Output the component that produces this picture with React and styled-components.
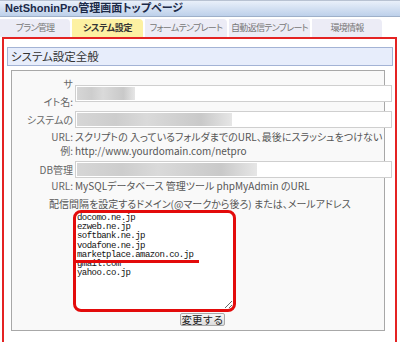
import styled, { createGlobalStyle } from "styled-components";

const GlobalStyle = createGlobalStyle`
  body {
    margin: 0;
    background: #fff;
    font-family: "Noto Sans CJK JP", "Liberation Sans", sans-serif;
  }
`;

const Page = styled.div`
  width: 400px;
  height: 342px;
  overflow: hidden;
  background: #fff;
`;

const Header = styled.div`
  height: 15px;
  border-top: 1px solid #b8c2d2;
  border-bottom: 1px solid #9eb0c9;
  background: linear-gradient(#e9f0fa, #bdd0ea);
  padding-left: 5px;
  font: bold 11px/15px "Liberation Sans", "Noto Sans CJK JP", sans-serif;
  color: #1c2a48;
  font-feature-settings: "palt";
`;

const Tabs = styled.div`
  display: flex;
  gap: 2px;
  margin-top: 2px;
  height: 18px;
`;

const Tab = styled.div`
  width: ${(p) => p.$w}px;
  background: ${(p) => (p.$active ? "#fdf1a2" : "#ececf6")};
  border-top-right-radius: 4px;
  text-align: center;
  white-space: nowrap;
  font-size: 9px;
  letter-spacing: ${(p) => (p.$active ? "-0.3px" : "-0.7px")};
  line-height: 18px;
  font-weight: ${(p) => (p.$active ? "bold" : "normal")};
  color: ${(p) => (p.$active ? "#333" : "#777")};
  font-feature-settings: "palt";
`;

const Panel = styled.div`
  margin: 0 3px 0 2px;
  border: 2px solid #e42323;
  border-bottom: none;
  padding: 8px 2px 20px 3px;
  background: #fff;
`;

const SectionTitle = styled.div`
  height: 17px;
  border: 1px solid #a3b3d5;
  background: #e7edfb;
  padding-left: 3px;
  font-size: 11.5px;
  line-height: 17px;
  color: #333;
  font-feature-settings: "palt";
`;

const Box = styled.div`
  margin: 4px 8px 0 4px;
  border: 1px solid #a8a8a8;
  background: #f9f9f9;
  padding: 4px 0 4px 0;
`;

const Row = styled.div`
  display: grid;
  grid-template-columns: 61px 1fr;
  column-gap: 2px;
  align-items: center;
  margin-top: ${(p) => p.$mt || 0}px;
  min-height: ${(p) => p.$h || 0}px;
`;

const Label = styled.div`
  text-align: right;
  font-size: 10px;
  line-height: ${(p) => p.$lh || 15}px;
  color: #666;
  font-feature-settings: "palt";
  white-space: nowrap;
`;

const Text = styled.div`
  font-size: 10px;
  line-height: ${(p) => p.$lh || 15}px;
  color: #555;
  white-space: nowrap;
  font-feature-settings: "palt";
`;

const Note = styled(Text)`
  grid-column: 1 / -1;
  padding-left: 37px;
`;

const Field = styled.div`
  width: 314px;
  height: 15px;
  border: 1px solid #cfcfcf;
  background: #fff;
  display: flex;
  align-items: center;
  padding-left: 1px;
`;

const Blur = styled.div`
  width: ${(p) => p.$w}px;
  height: 13px;
  background: linear-gradient(
    90deg,
    #d6d6d6 0%,
    #cdcdcd 25%,
    #dadada 45%,
    #d0d0d0 65%,
    #c9c9c9 80%,
    #e6e6e6 100%
  );
`;

const AreaWrap = styled.div`
  position: relative;
  width: 163px;
  height: 102px;
  margin-left: -2px;
`;

const Area = styled.textarea`
  display: block;
  box-sizing: border-box;
  width: 163px;
  height: 102px;
  border: 3px solid #e30b0b;
  border-radius: 8px;
  padding: 1px 1px;
  margin: 0;
  background: #fff;
  font-family: "Liberation Mono", "DejaVu Sans Mono", monospace;
  font-size: 9px;
  letter-spacing: -0.55px;
  line-height: 9.2px;
  color: #111;
  outline: none;
  overflow: hidden;
`;

const Strike = styled.div`
  position: absolute;
  left: 3px;
  top: 50px;
  width: 123px;
  height: 2.5px;
  background: #e30b0b;
`;

const Button = styled.button`
  margin-left: ${(p) => p.$ml}px;
  width: 45px;
  height: 13px;
  padding: 0;
  border: 1px solid #a9a9a9;
  border-radius: 2px;
  background: linear-gradient(#f7f7f7, #dcdcdc);
  font-family: "Noto Sans CJK JP", sans-serif;
  font-size: 10.5px;
  line-height: 11px;
  color: #222;
`;

const domains = [
  "docomo.ne.jp",
  "ezweb.ne.jp",
  "softbank.ne.jp",
  "vodafone.ne.jp",
  "marketplace.amazon.co.jp",
  "gmail.com",
  "yahoo.co.jp",
].join("\n");

const tabs = [
  { name: "プラン管理", w: 70 },
  { name: "システム設定", w: 71, active: true },
  { name: "フォームテンプレート", w: 82 },
  { name: "自動返信テンプレート", w: 81 },
  { name: "環境情報", w: 70 },
];

export default function App() {
  return (
    <Page>
      <GlobalStyle />
      <Header>NetShoninPro管理画面トップページ</Header>
      <Tabs>
        {tabs.map((t) => (
          <Tab key={t.name} $w={t.w} $active={t.active}>
            {t.name}
          </Tab>
        ))}
      </Tabs>
      <Panel>
        <SectionTitle>システム設定全般</SectionTitle>
        <Box>
          <Row $h={33}>
            <Label $lh={18}>
              サ
              <br />
              イト名:
            </Label>
            <Field>
              <Blur $w={58} />
            </Field>
          </Row>
          <Row $h={17}>
            <Label>システムの</Label>
            <Field>
              <Blur $w={155} />
            </Field>
          </Row>
          <Row $mt={1}>
            <Label>URL:</Label>
            <Text>スクリプトの 入っているフォルダまでのURL、最後にスラッシュをつけない</Text>
          </Row>
          <Row>
            <Label $lh={14}>例:</Label>
            <Text $lh={14}>http://www.yourdomain.com/netpro</Text>
          </Row>
          <Row $mt={3} $h={17}>
            <Label>DB管理</Label>
            <Field>
              <Blur $w={180} />
            </Field>
          </Row>
          <Row>
            <Label>URL:</Label>
            <Text>MySQLデータベース 管理ツール phpMyAdmin のURL</Text>
          </Row>
          <Row $mt={3}>
            <Note>配信間隔を設定するドメイン(@マークから後ろ) または、メールアドレス</Note>
          </Row>
          <Row $mt={-1}>
            <span />
            <AreaWrap>
              <Area defaultValue={domains} spellCheck={false} />
              <Strike />
            </AreaWrap>
          </Row>
          <Row $mt={1}>
            <span />
            <Button $ml={105}>変更する</Button>
          </Row>
        </Box>
      </Panel>
    </Page>
  );
}
